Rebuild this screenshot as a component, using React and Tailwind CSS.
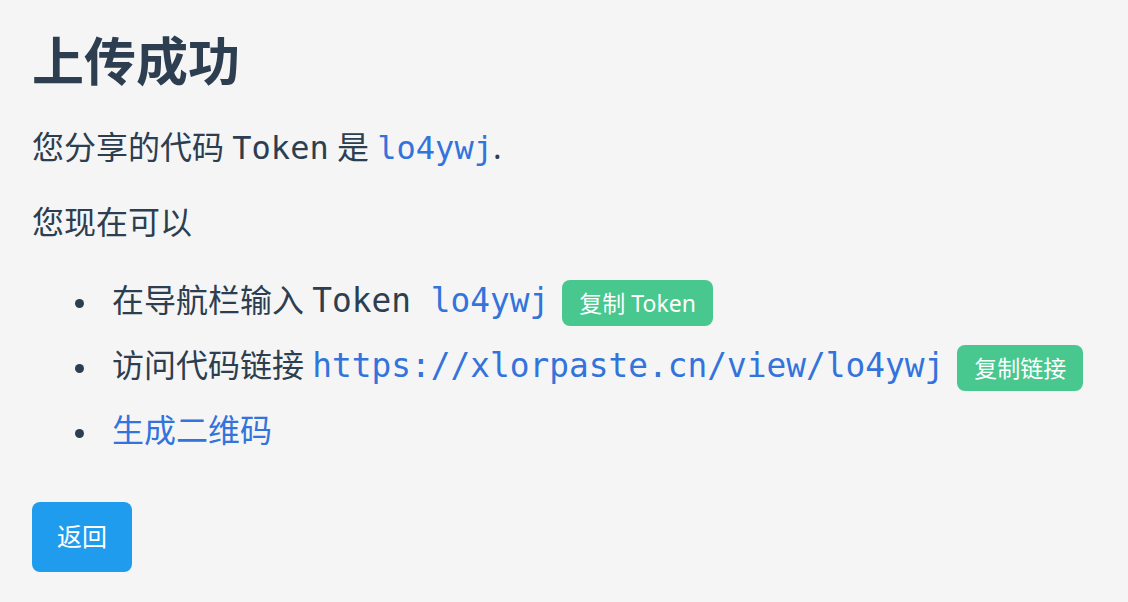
import React from 'react';

const mono = "font-['DejaVu_Sans_Mono',monospace]";

function Badge({ children }) {
  return (
    <span className="ml-[13px] inline-flex h-[46px] items-center rounded-lg bg-[#48c78e] px-[17px] align-middle text-[23px] leading-none text-white">
      {children}
    </span>
  );
}

function Dot() {
  return <span className="-ml-[37px] mr-[28px] inline-block h-[9px] w-[9px] rounded-full bg-[#2c3e50] align-middle" />;
}

export default function App() {
  return (
    <div className="min-h-[602px] w-full bg-[#f5f5f5] px-8 pt-[29px] text-[#2c3e50] font-['Noto_Sans','Noto_Sans_CJK_SC',sans-serif]">
      <h1 className="text-[52px] font-bold leading-[64px]">上传成功</h1>
      <p className="mt-[30px] text-[32px] leading-[48px]">
        您分享的代码 <span className={mono}>Token</span> 是{' '}
        <span className={`${mono} text-[#3273dc]`}>lo4ywj</span>.
      </p>
      <p className="mt-[26px] text-[32px] leading-[48px]">您现在可以</p>
      <ul className="mt-[22px] list-none pl-[80px] text-[32px] leading-[64px]">
        <li>
          <Dot />
          在导航栏输入{' '}
          <span className={`${mono} text-[32.8px]`}>
            Token <span className="text-[#3273dc]">lo4ywj</span>
          </span>
          <Badge>复制 Token</Badge>
        </li>
        <li>
          <Dot />
          访问代码链接{' '}
          <span className={`${mono} text-[32.8px] text-[#3273dc]`}>
            https://xlorpaste.cn/view/lo4ywj
          </span>
          <Badge>复制链接</Badge>
        </li>
        <li>
          <Dot />
          <a className="text-[#3273dc]">生成二维码</a>
        </li>
      </ul>
      <button className="mt-10 h-[70px] rounded-lg bg-[#209cee] px-[25px] text-[25px] text-white">
        返回
      </button>
    </div>
  );
}
